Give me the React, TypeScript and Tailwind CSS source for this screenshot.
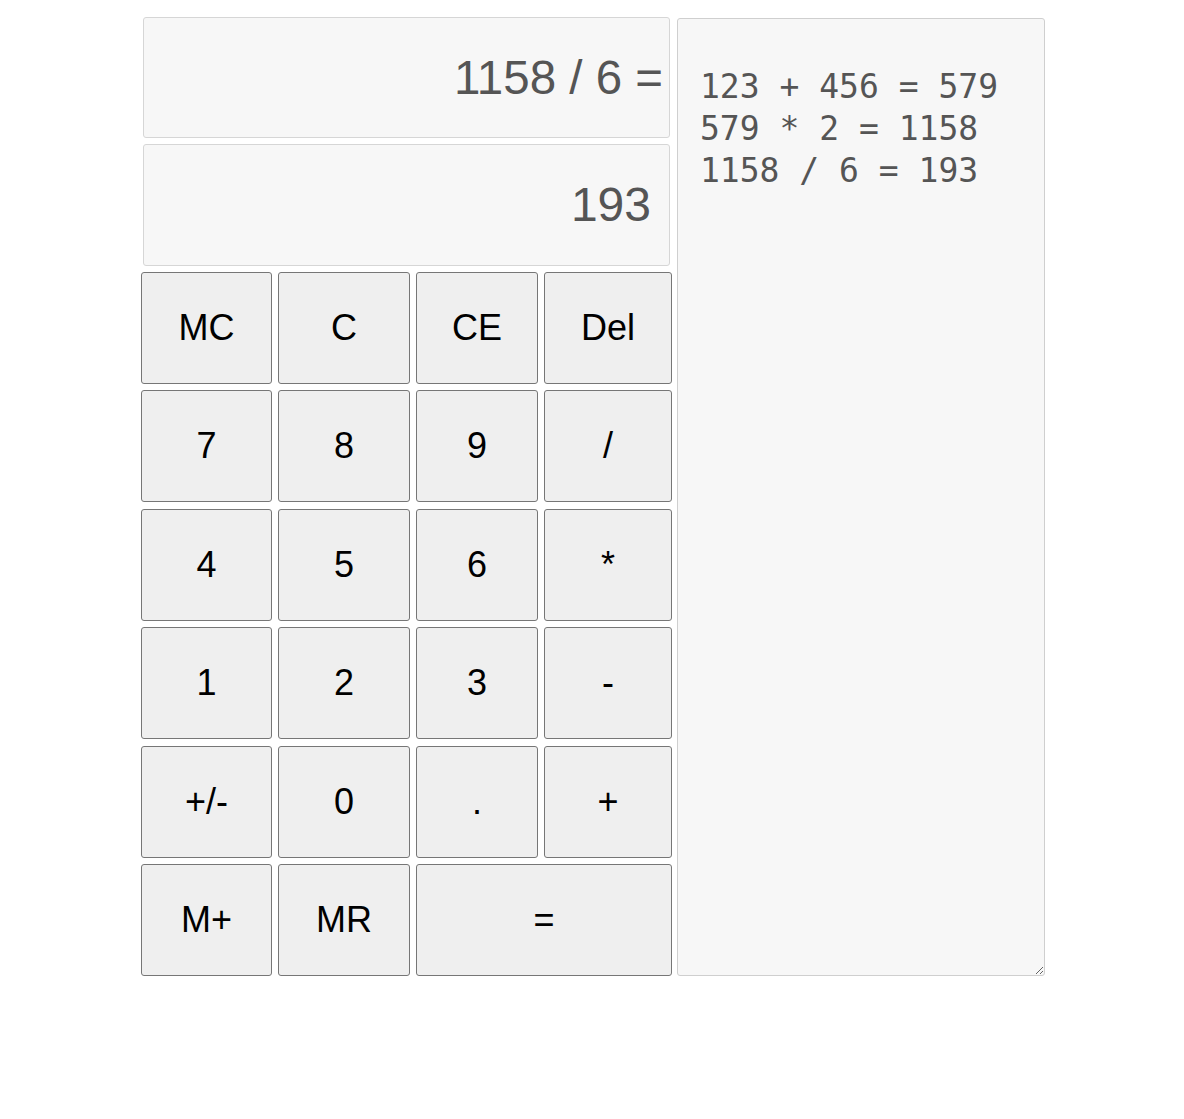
const keys: { label: string; wide?: boolean }[] = [
  { label: "MC" },
  { label: "C" },
  { label: "CE" },
  { label: "Del" },
  { label: "7" },
  { label: "8" },
  { label: "9" },
  { label: "/" },
  { label: "4" },
  { label: "5" },
  { label: "6" },
  { label: "*" },
  { label: "1" },
  { label: "2" },
  { label: "3" },
  { label: "-" },
  { label: "+/-" },
  { label: "0" },
  { label: "." },
  { label: "+" },
  { label: "M+" },
  { label: "MR" },
  { label: "=", wide: true },
];

const history = ["123 + 456 = 579", "579 * 2 = 1158", "1158 / 6 = 193"].join("\n");

export default function App() {
  return (
    <div className="flex min-h-screen justify-center bg-white pl-[2px] pt-[17px] font-['Liberation_Sans',Arial,sans-serif]">
      <div className="flex items-start gap-[5px]">
        <div className="flex w-[531px] flex-col">
          <div className="mx-[2px] flex h-[121px] items-center justify-end rounded-[3px] border border-[#d6d6d6] bg-[#f7f7f7] pr-[6px] text-[47.5px] text-[#555]">
            1158 / 6 =
          </div>
          <div className="mx-[2px] mt-[6px] flex h-[122px] items-center justify-end rounded-[3px] border border-[#d6d6d6] bg-[#f7f7f7] pr-[18px] text-[48px] text-[#555]">
            193
          </div>
          <div className="mt-[6px] grid grid-cols-[131px_132px_122px_128px] auto-rows-[112px] gap-x-[6px] gap-y-[6.4px]">
            {keys.map((k) => (
              <button
                key={k.label}
                className={`flex items-center justify-center rounded-[3px] border border-[#767676] bg-[#efefef] text-[36px] text-black ${
                  k.wide ? "col-span-2" : ""
                }`}
              >
                {k.label}
              </button>
            ))}
          </div>
        </div>
        <textarea
          readOnly
          value={history}
          className="mt-[1px] h-[958px] w-[368px] rounded-[3px] border border-[#cfcfcf] bg-[#f7f7f7] pl-[22px] pt-[47px] pr-[10px] font-['DejaVu_Sans_Mono',monospace] text-[33px] leading-[42px] text-[#555] outline-none"
        />
      </div>
    </div>
  );
}
